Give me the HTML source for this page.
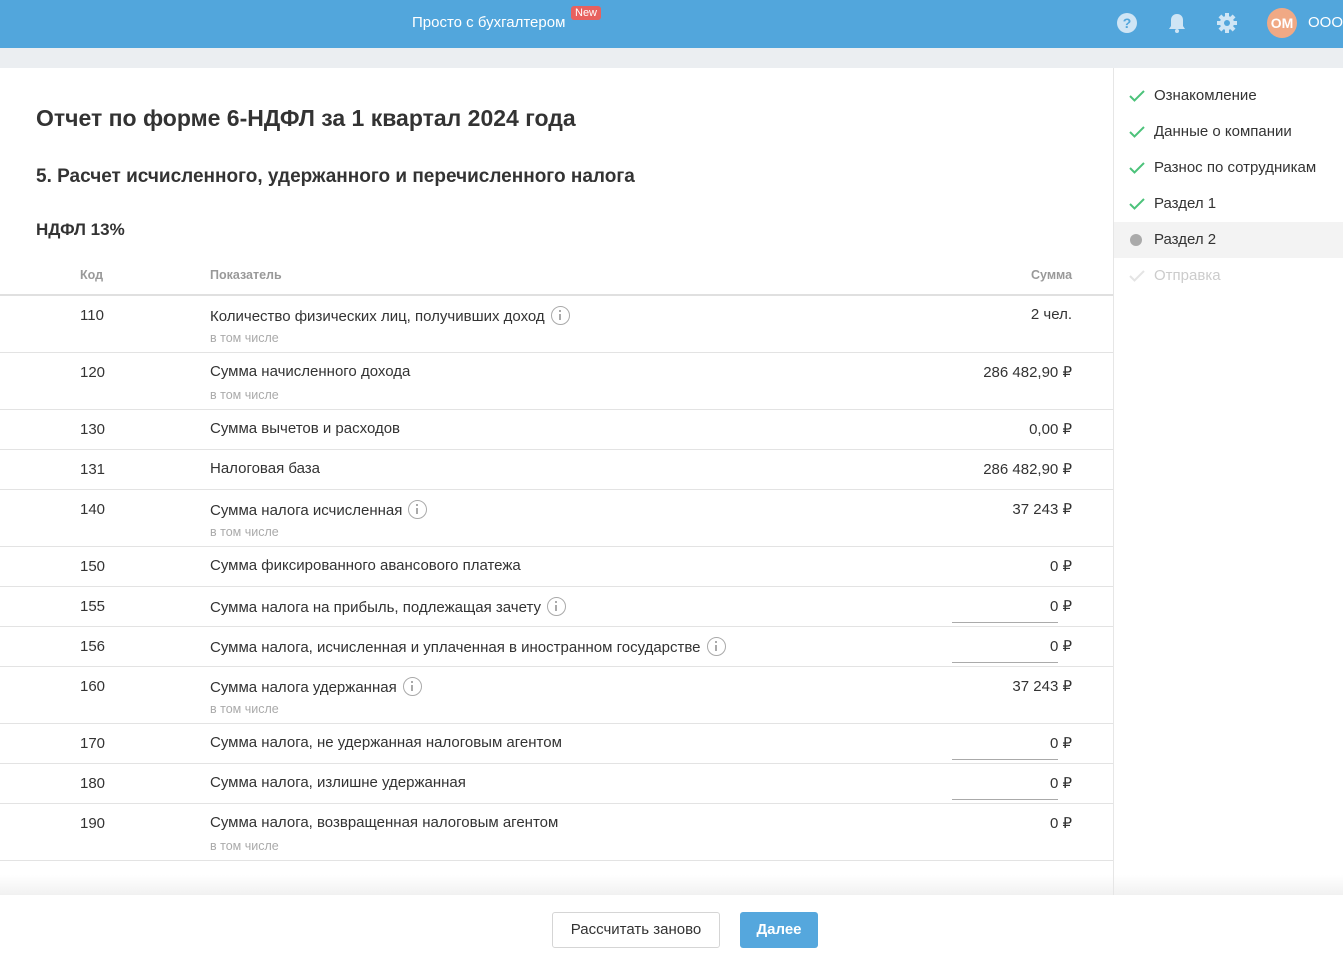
<!DOCTYPE html>
<html><head><meta charset="utf-8"><style>
*{margin:0;padding:0;box-sizing:border-box}
body{width:1343px;height:960px;overflow:hidden;font-family:"Liberation Sans",sans-serif;color:#333;background:#fff;position:relative}
.top{position:absolute;left:0;top:0;width:1343px;height:48px;background:#52a6dc}
.band{position:absolute;left:0;top:48px;width:1343px;height:20px;background:#ebeef1}
.side{position:absolute;left:1113px;top:68px;width:230px;height:827px;border-left:1px solid #e6e6e6}
.si{position:absolute;left:0;width:230px;height:36px;font-size:15px;line-height:36px;padding-left:40px}
.a{position:absolute}
.row{position:absolute;left:0;width:1113px;border-bottom:1px solid #e3e3e3}
.code{position:absolute;left:80px;top:11px;font-size:15px}
.lab{position:absolute;left:210px;top:10px;font-size:15px;white-space:nowrap}
.sub{position:absolute;left:210px;top:35px;font-size:12.5px;color:#aaa}
.sum{position:absolute;right:41px;top:10px;font-size:15px}
.inp{position:absolute;left:952px;top:35px;width:106px;border-top:1px solid #aaa}
.i{display:inline-block;width:19px;height:19px;border:1.5px solid #aaa;border-radius:50%;vertical-align:-4px;margin-left:6px;position:relative}
.i:before{content:"";position:absolute;left:7px;top:3px;width:2px;height:2px;background:#aaa}
.i:after{content:"";position:absolute;left:7px;top:7px;width:2px;height:6px;background:#aaa}
</style></head><body>
<div class="top">
<div class="a" style="left:412px;top:14px;color:#fff;font-size:15px">Просто с бухгалтером</div>
<div class="a" style="left:571px;top:6px;background:#e8615e;color:#fff;font-size:11px;padding:1px 4px;border-radius:3px">New</div>
<svg class="a" style="left:1116px;top:12px" width="22" height="22"><circle cx="11" cy="11" r="10" fill="#cfe5f5"/><text x="11" y="16" font-size="14" font-weight="bold" fill="#52a6dc" text-anchor="middle" font-family="Liberation Sans">?</text></svg>
<svg class="a" style="left:1167px;top:12px" width="20" height="22"><path d="M10 2c-4 0-6 3-6 6v6l-2 3h16l-2-3V8c0-3-2-6-6-6z" fill="#cfe5f5"/><circle cx="10" cy="19" r="2" fill="#cfe5f5"/></svg>
<svg class="a" style="left:1216px;top:12px" width="22" height="22"><g fill="#cfe5f5"><circle cx="11" cy="11" r="7"/><rect x="9" y="1" width="4" height="20"/><rect x="1" y="9" width="20" height="4"/><rect x="9" y="1" width="4" height="20" transform="rotate(45 11 11)"/><rect x="9" y="1" width="4" height="20" transform="rotate(-45 11 11)"/></g><circle cx="11" cy="11" r="3" fill="#52a6dc"/></svg>
<div class="a" style="left:1267px;top:8px;width:30px;height:30px;border-radius:50%;background:#f0a985;color:#fff;font-size:14px;font-weight:bold;text-align:center;line-height:30px">ОМ</div>
<div class="a" style="left:1308px;top:14px;color:#fff;font-size:15px">ООО</div>
</div>
<div class="band"></div>
<div class="a" style="left:36px;top:105px;font-size:23px;font-weight:bold;color:#333">Отчет по форме 6-НДФЛ за 1 квартал 2024 года</div>
<div class="a" style="left:36px;top:166px;font-size:19px;font-weight:bold;color:#333">5. Расчет исчисленного, удержанного и перечисленного налога</div>
<div class="a" style="left:36px;top:220px;font-size:17px;font-weight:bold;color:#333">НДФЛ 13%</div>
<div class="a" style="left:80px;top:268px;font-size:12.5px;color:#999;font-weight:bold">Код</div>
<div class="a" style="left:210px;top:268px;font-size:12.5px;color:#999;font-weight:bold">Показатель</div>
<div class="a" style="left:1031px;top:268px;font-size:12.5px;color:#999;font-weight:bold">Сумма</div>
<div class="a" style="left:0;top:294px;width:1113px;height:2px;background:#e0e0e0"></div>

<div class="row" style="top:296px;height:57px"><div class="code">110</div><div class="lab">Количество физических лиц, получивших доход<span class="i"></span></div><div class="sub">в том числе</div><div class="sum">2 чел.</div></div>
<div class="row" style="top:353px;height:57px"><div class="code">120</div><div class="lab">Сумма начисленного дохода</div><div class="sub">в том числе</div><div class="sum">286 482,90 ₽</div></div>
<div class="row" style="top:410px;height:40px"><div class="code">130</div><div class="lab">Сумма вычетов и расходов</div><div class="sum">0,00 ₽</div></div>
<div class="row" style="top:450px;height:40px"><div class="code">131</div><div class="lab">Налоговая база</div><div class="sum">286 482,90 ₽</div></div>
<div class="row" style="top:490px;height:57px"><div class="code">140</div><div class="lab">Сумма налога исчисленная<span class="i"></span></div><div class="sub">в том числе</div><div class="sum">37 243 ₽</div></div>
<div class="row" style="top:547px;height:40px"><div class="code">150</div><div class="lab">Сумма фиксированного авансового платежа</div><div class="sum">0 ₽</div></div>
<div class="row" style="top:587px;height:40px"><div class="code">155</div><div class="lab">Сумма налога на прибыль, подлежащая зачету<span class="i"></span></div><div class="sum">0 ₽</div><div class="inp"></div></div>
<div class="row" style="top:627px;height:40px"><div class="code">156</div><div class="lab">Сумма налога, исчисленная и уплаченная в иностранном государстве<span class="i"></span></div><div class="sum">0 ₽</div><div class="inp"></div></div>
<div class="row" style="top:667px;height:57px"><div class="code">160</div><div class="lab">Сумма налога удержанная<span class="i"></span></div><div class="sub">в том числе</div><div class="sum">37 243 ₽</div></div>
<div class="row" style="top:724px;height:40px"><div class="code">170</div><div class="lab">Сумма налога, не удержанная налоговым агентом</div><div class="sum">0 ₽</div><div class="inp"></div></div>
<div class="row" style="top:764px;height:40px"><div class="code">180</div><div class="lab">Сумма налога, излишне удержанная</div><div class="sum">0 ₽</div><div class="inp"></div></div>
<div class="row" style="top:804px;height:57px"><div class="code">190</div><div class="lab">Сумма налога, возвращенная налоговым агентом</div><div class="sub">в том числе</div><div class="sum">0 ₽</div></div>

<div class="side">
<div class="si" style="top:10px"><svg class="a" style="left:15px;top:12px" width="16" height="12"><path d="M1 6l4.5 4.5L15 1" stroke="#4cc27a" stroke-width="2" fill="none"/></svg>Ознакомление</div>
<div class="si" style="top:46px"><svg class="a" style="left:15px;top:12px" width="16" height="12"><path d="M1 6l4.5 4.5L15 1" stroke="#4cc27a" stroke-width="2" fill="none"/></svg>Данные о компании</div>
<div class="si" style="top:82px"><svg class="a" style="left:15px;top:12px" width="16" height="12"><path d="M1 6l4.5 4.5L15 1" stroke="#4cc27a" stroke-width="2" fill="none"/></svg>Разнос по сотрудникам</div>
<div class="si" style="top:118px"><svg class="a" style="left:15px;top:12px" width="16" height="12"><path d="M1 6l4.5 4.5L15 1" stroke="#4cc27a" stroke-width="2" fill="none"/></svg>Раздел 1</div>
<div class="si" style="top:154px;background:#f3f3f3"><span class="a" style="left:16px;top:12px;width:12px;height:12px;border-radius:50%;background:#aaa"></span>Раздел 2</div>
<div class="si" style="top:190px;color:#ccc"><svg class="a" style="left:15px;top:12px" width="16" height="12"><path d="M1 6l4.5 4.5L15 1" stroke="#e4e4e4" stroke-width="2" fill="none"/></svg>Отправка</div>
</div>

<div class="a" style="left:0;top:875px;width:1113px;height:20px;background:linear-gradient(rgba(255,255,255,0),#f1f1f1)"></div>
<div class="a" style="left:1114px;top:875px;width:229px;height:20px;background:linear-gradient(rgba(255,255,255,0),#f1f1f1)"></div>
<div class="a" style="left:0;top:895px;width:1343px;height:65px;background:#fff"></div>
<div class="a" style="left:552px;top:912px;width:168px;height:36px;border:1px solid #d5d5d5;border-radius:3px;font-size:15px;text-align:center;line-height:34px">Рассчитать заново</div>
<div class="a" style="left:740px;top:912px;width:78px;height:36px;background:#55a7dd;border-radius:3px;color:#fff;font-size:15px;font-weight:bold;text-align:center;line-height:36px">Далее</div>
</body></html>
